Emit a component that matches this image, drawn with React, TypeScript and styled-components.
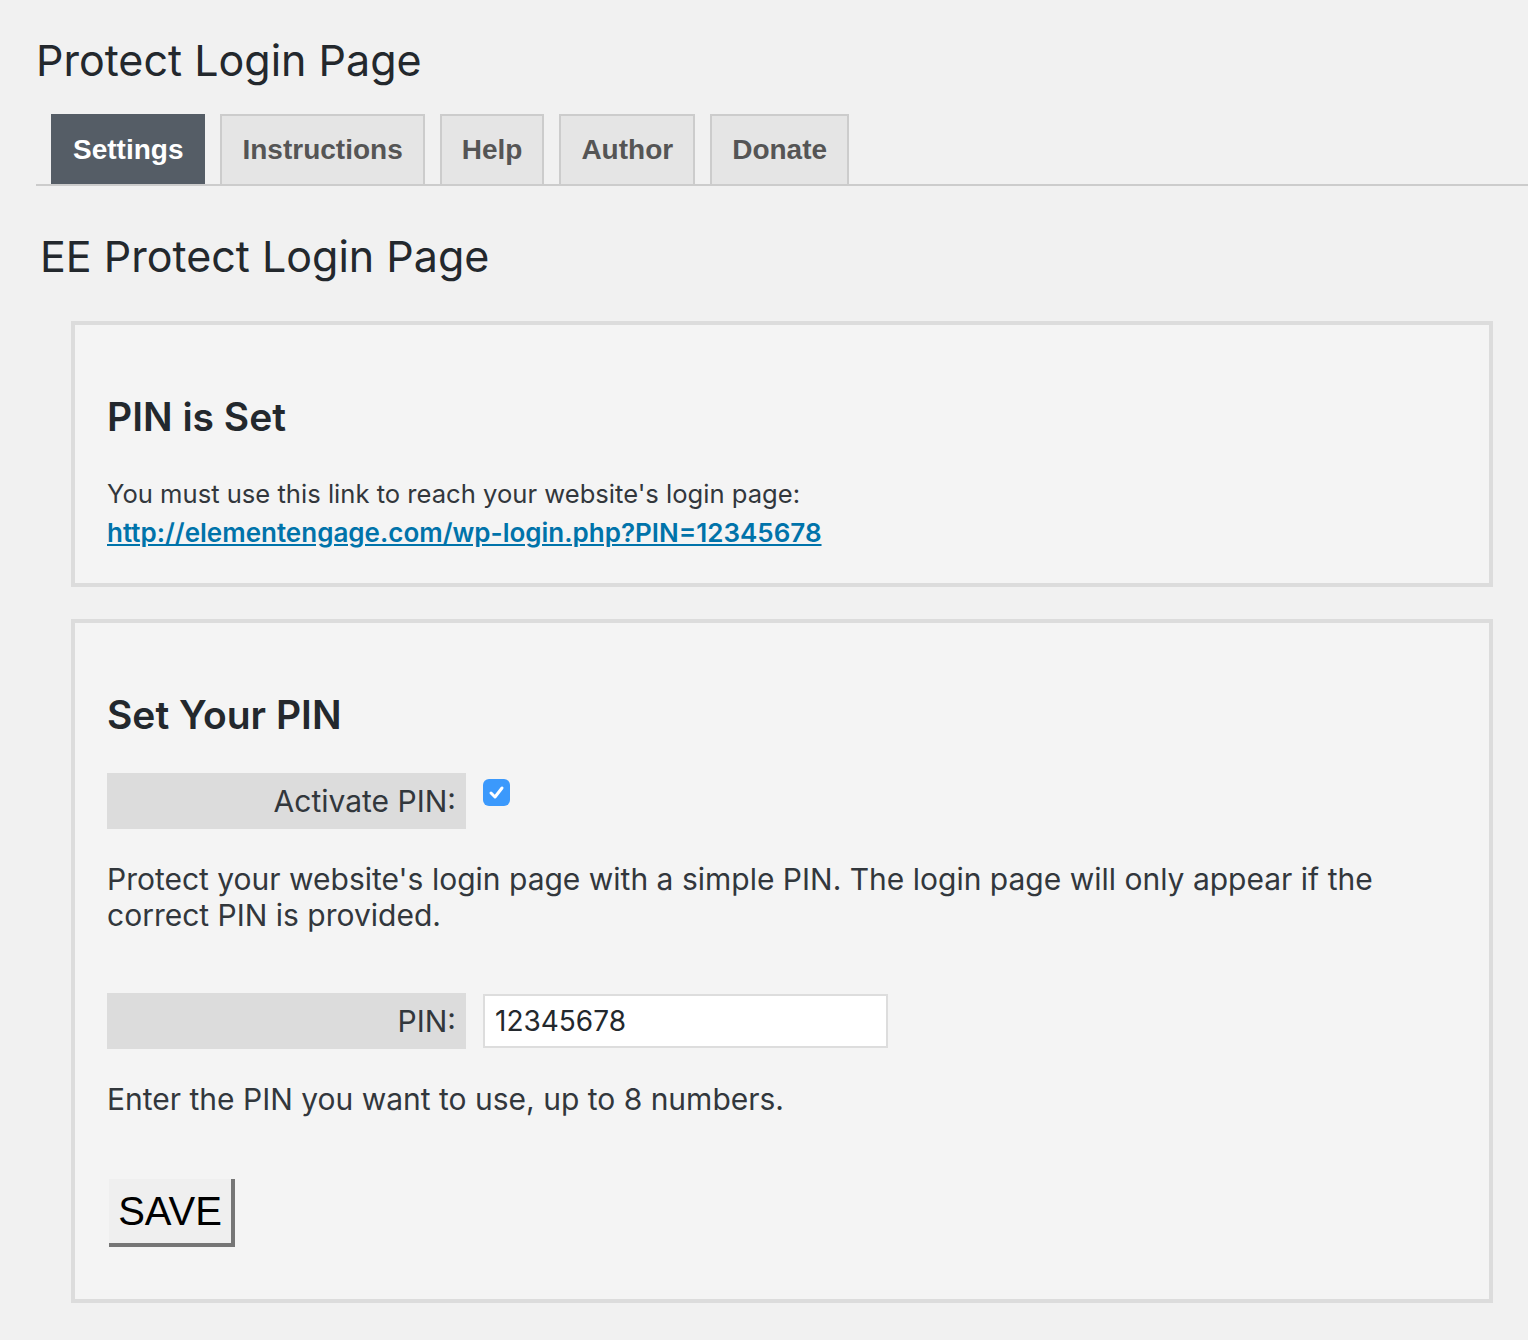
import React from 'react';
import styled, { createGlobalStyle } from 'styled-components';

const GlobalStyle = createGlobalStyle`
  body {
    margin: 0;
    background: #f1f1f1;
    font-family: Inter, "Noto Sans", sans-serif;
    color: #23282d;
  }
`;

const Wrap = styled.div`
  padding: 30px 0 40px 36px;
`;

const PageTitle = styled.h1`
  margin: 0 0 24px 0;
  font-size: 43px;
  font-weight: 400;
  line-height: 60px;
  color: #23282d;
`;

const TabBar = styled.nav`
  display: flex;
  gap: 15px;
  padding-left: 15px;
  border-bottom: 2px solid #ccc;
  height: 70px;
`;

const Tab = styled.a<{ $active?: boolean }>`
  display: flex;
  align-items: center;
  padding: 0 20px;
  height: 70px;
  box-sizing: border-box;
  border: 2px solid ${p => (p.$active ? '#555d66' : '#ccc')};
  border-bottom: none;
  background: ${p => (p.$active ? '#555d66' : '#e5e5e5')};
  color: ${p => (p.$active ? '#fff' : '#555')};
  font-family: "Liberation Sans", Arial, sans-serif;
  font-weight: 700;
  font-size: 28px;
  text-decoration: none;
`;

const SubTitle = styled.h2`
  margin: 40px 0 35px 4px;
  font-size: 43px;
  font-weight: 400;
  line-height: 60px;
`;

const Sections = styled.div`
  display: flex;
  flex-direction: column;
  gap: 32px;
  margin-left: 35px;
  width: 1422px;
`;

const Card = styled.section<{ $bottom?: number }>`
  border: 4px solid #dcdcdc;
  background: #f4f4f4;
  padding: 64px 32px ${p => p.$bottom ?? 31}px 32px;
`;

const CardTitle = styled.h3`
  margin: 0 0 30px 0;
  font-size: 39px;
  font-weight: 600;
  line-height: 56px;
  color: #23282d;
`;

const Text = styled.p<{ $size?: number }>`
  margin: 0;
  font-size: ${p => p.$size || 30}px;
  line-height: ${p => (p.$size ? p.$size * 1.5 : 36)}px;
  color: #32373c;
`;

const Link = styled.a`
  font-size: 26px;
  line-height: 39px;
  font-weight: 600;
  color: #0073aa;
  text-decoration: underline;
`;

const FieldRow = styled.div<{ $align?: string }>`
  display: flex;
  align-items: ${p => p.$align || 'center'};
  gap: 17px;
`;

const FieldLabel = styled.label`
  width: 359px;
  height: 56px;
  box-sizing: border-box;
  padding-right: 10px;
  display: flex;
  align-items: center;
  justify-content: flex-end;
  background: #dcdcdc;
  font-size: 30px;
  color: #32373c;
`;

const Check = styled.span`
  width: 27px;
  height: 27px;
  margin-top: 6px;
  border-radius: 6px;
  background: #3b99fc;
  display: flex;
  align-items: center;
  justify-content: center;
`;

const PinInput = styled.input`
  width: 405px;
  height: 54px;
  box-sizing: border-box;
  border: 2px solid #ddd;
  background: #fff;
  padding: 0 10px;
  font-family: Inter, sans-serif;
  font-size: 28px;
  color: #23282d;
  outline: none;
`;

const SaveButton = styled.button`
  margin-top: 62px;
  margin-left: 2px;
  width: 126px;
  height: 68px;
  box-sizing: border-box;
  background: #efefef;
  border-style: solid;
  border-width: 0 4px 4px 0;
  border-color: #efefef #767676 #767676 #efefef;
  font-family: "Liberation Sans", Arial, sans-serif;
  font-size: 40px;
  color: #000;
  padding: 0;
`;

const App: React.FC = () => {
  return (
    <Wrap>
      <GlobalStyle />
      <PageTitle>Protect Login Page</PageTitle>
      <TabBar>
        <Tab $active>Settings</Tab>
        <Tab>Instructions</Tab>
        <Tab>Help</Tab>
        <Tab>Author</Tab>
        <Tab>Donate</Tab>
      </TabBar>
      <SubTitle>EE Protect Login Page</SubTitle>
      <Sections>
        <Card>
          <CardTitle>PIN is Set</CardTitle>
          <Text $size={25.6}>You must use this link to reach your website's login page:</Text>
          <Link href="#">http://elementengage.com/wp-login.php?PIN=12345678</Link>
        </Card>
        <Card $bottom={52}>
          <CardTitle>Set Your PIN</CardTitle>
          <FieldRow $align="flex-start">
            <FieldLabel>Activate PIN:</FieldLabel>
            <Check>
              <svg width="17" height="17" viewBox="0 0 17 17">
                <path d="M3 9 L7 13 L14 4" fill="none" stroke="#fff" strokeWidth="3" strokeLinecap="round" strokeLinejoin="round" />
              </svg>
            </Check>
          </FieldRow>
          <Text style={{ margin: '32px 0 60px' }}>
            Protect your website's login page with a simple PIN. The login page will only appear if the correct PIN is provided.
          </Text>
          <FieldRow>
            <FieldLabel>PIN:</FieldLabel>
            <PinInput defaultValue="12345678" />
          </FieldRow>
          <Text style={{ marginTop: 32 }}>Enter the PIN you want to use, up to 8 numbers.</Text>
          <SaveButton>SAVE</SaveButton>
        </Card>
      </Sections>
    </Wrap>
  );
};

export default App;
